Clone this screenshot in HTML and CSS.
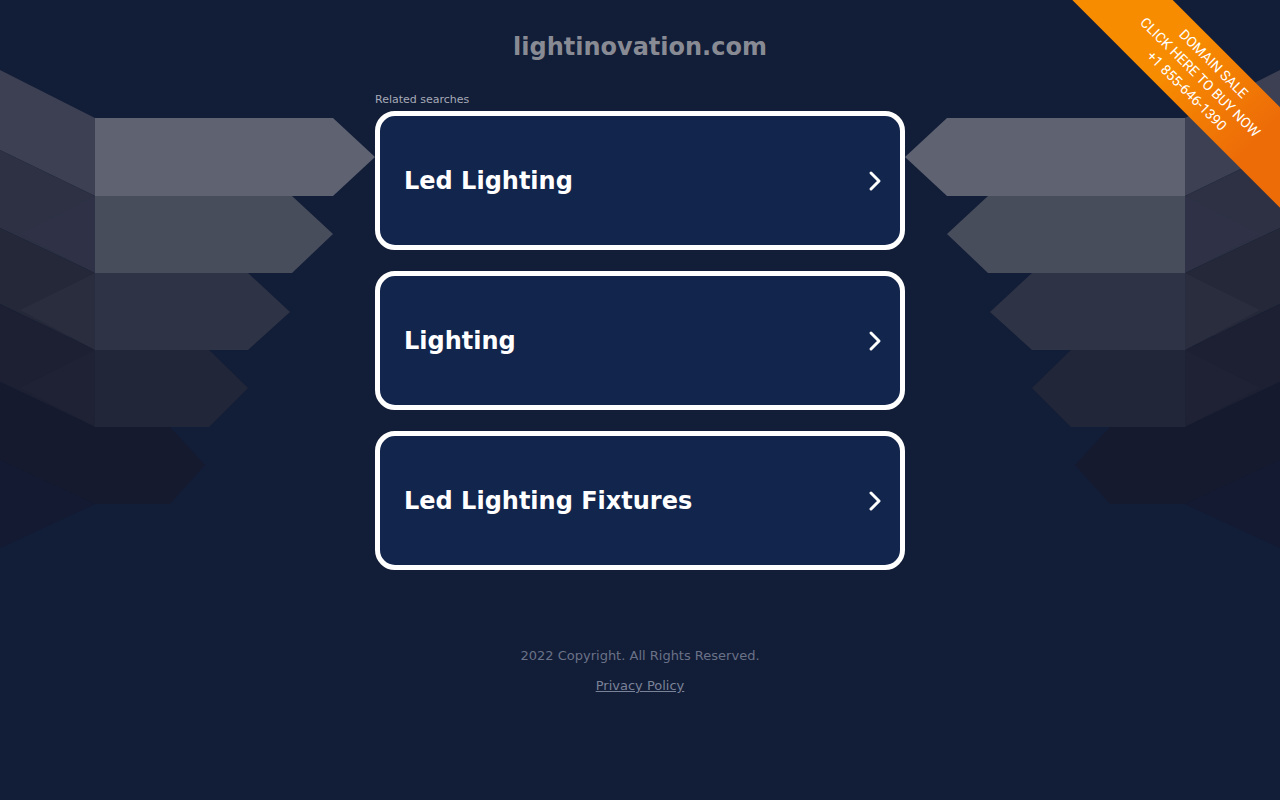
FILE: index.html
```html
<!DOCTYPE html>
<html lang="en">
<head>
    <meta charset="UTF-8">
    <meta name="viewport" content="width=device-width, initial-scale=1.0">
    <title>lightinovation.com</title>
    <link rel="stylesheet" href="styles.css">
</head>
<body>
    <!-- decorative arrows behind the content -->
    <svg class="backdrop" width="1280" height="600" viewBox="0 0 1280 600" aria-hidden="true">
        <defs>
            <g id="wing">
                <polygon points="0,70 95,118 95,196 0,150" fill="#3c4052"/>
                <polygon points="0,150 95,196 95,273 0,228" fill="#2d3143"/>
                <polygon points="0,228 95,273 95,350 0,304" fill="#242839"/>
                <polygon points="0,304 95,350 95,427 0,382" fill="#1c2032"/>
                <polygon points="0,382 95,427 95,504 0,460" fill="#161a2e"/>
                <polygon points="0,460 95,504 0,548" fill="#141a31"/>
                <polygon points="20,234 95,196 95,273" fill="#30344a" opacity="0.6"/>
                <polygon points="20,310 95,273 95,350" fill="#2a2e40" opacity="0.8"/>
                <polygon points="20,388 95,350 95,427" fill="#1f2335" opacity="0.8"/>
                <polygon points="95,118 333,118 375,157 333,196 95,196" fill="#5f6371"/>
                <polygon points="95,196 292,196 333,234 292,273 95,273" fill="#484d5c"/>
                <polygon points="95,273 248,273 290,312 248,350 95,350" fill="#2f3346"/>
                <polygon points="95,350 209,350 248,388 209,427 95,427" fill="#222639"/>
                <polygon points="95,427 170,427 205,465 170,504 95,504" fill="#151a2f"/>
            </g>
        </defs>
        <use href="#wing"/>
        <use href="#wing" transform="translate(1280,0) scale(-1,1)"/>
    </svg>

    <a class="ribbon" href="#">
        <span>DOMAIN SALE</span>
        <span>CLICK HERE TO BUY NOW</span>
        <span>+1 855-646-1390</span>
    </a>

    <div class="container">
        <h1 class="domain">lightinovation.com</h1>

        <p class="related">Related searches</p>

        <div class="results">
            <a class="result" href="#">
                <span>Led Lighting</span>
                <svg class="chevron" width="14" height="22" viewBox="0 0 14 22"><path d="M3 3 L11 11 L3 19"/></svg>
            </a>
            <a class="result" href="#">
                <span>Lighting</span>
                <svg class="chevron" width="14" height="22" viewBox="0 0 14 22"><path d="M3 3 L11 11 L3 19"/></svg>
            </a>
            <a class="result" href="#">
                <span>Led Lighting Fixtures</span>
                <svg class="chevron" width="14" height="22" viewBox="0 0 14 22"><path d="M3 3 L11 11 L3 19"/></svg>
            </a>
        </div>

        <div class="footer">
            <p>2022 Copyright. All Rights Reserved.</p>
            <a href="#">Privacy Policy</a>
        </div>
    </div>
</body>
</html>
```

FILE: styles.css
```css
body {
    font-family: "DejaVu Sans", sans-serif;
    background-color: #121d37;
    margin: 0;
    padding: 0;
    min-height: 800px;
    position: relative;
    overflow: hidden;
}
.backdrop {
    position: absolute;
    top: 0;
    left: 0;
    z-index: 0;
}
.ribbon {
    position: absolute;
    top: 42px;
    left: 1050px;
    width: 300px;
    height: 71px;
    transform: rotate(45deg);
    background: linear-gradient(to right, #f78c00 40%, #ed6c08 78%);
    color: #fff;
    font-family: Roboto, sans-serif;
    font-size: 14px;
    line-height: 19px;
    text-decoration: none;
    display: flex;
    flex-direction: column;
    align-items: center;
    justify-content: center;
    z-index: 2;
}
.container {
    position: relative;
    z-index: 1;
    width: 530px;
    margin: 0 auto;
}
.domain {
    margin: 0;
    padding-top: 33px;
    font-size: 24px;
    line-height: 28px;
    text-align: center;
    color: #888b94;
}
.related {
    margin: 32px 0 4px;
    font-size: 11px;
    line-height: 14px;
    color: #a6aab8;
}
.results {
    display: flex;
    flex-direction: column;
    gap: 21px;
}
.result {
    display: flex;
    align-items: center;
    justify-content: space-between;
    height: 139px;
    box-sizing: border-box;
    padding: 0 18px 0 24px;
    border: 5px solid #fff;
    border-radius: 20px;
    background-color: #12254d;
    color: #fff;
    font-size: 24px;
    font-weight: bold;
    text-decoration: none;
}
.chevron path {
    fill: none;
    stroke: #fff;
    stroke-width: 3;
    stroke-linecap: round;
    stroke-linejoin: round;
}
.footer {
    margin-top: 77px;
    text-align: center;
    font-size: 13px;
    line-height: 18px;
    color: #6a7287;
}
.footer p {
    margin: 0 0 12px;
}
.footer a {
    color: #7a8298;
}
```
